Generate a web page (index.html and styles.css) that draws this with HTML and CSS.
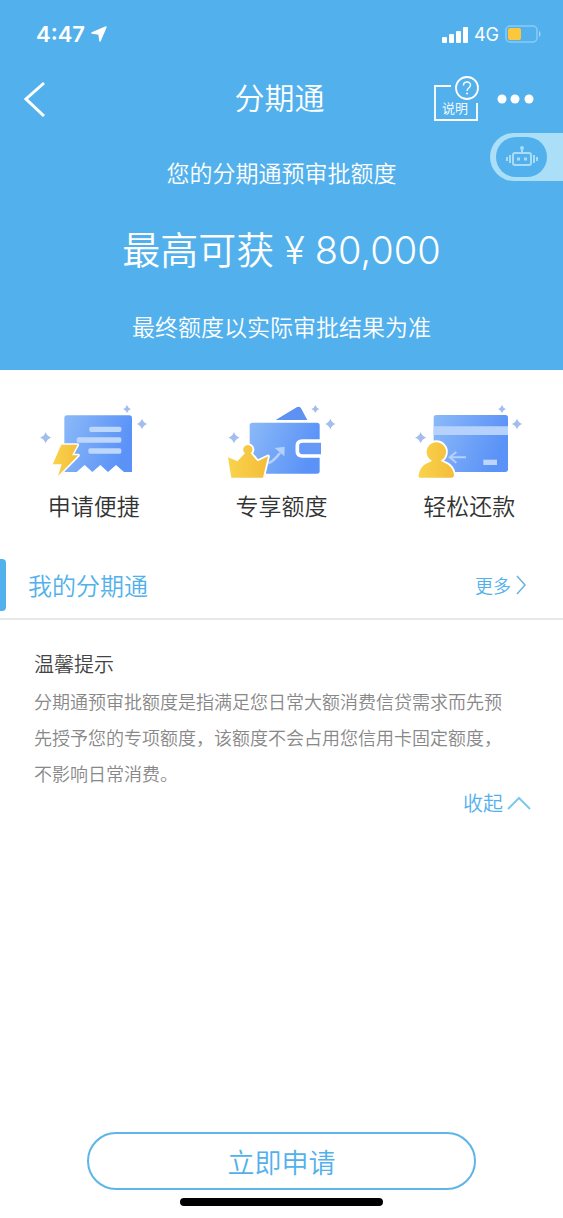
FILE: index.html
```html
<!DOCTYPE html>
<html lang="zh-CN">
<head>
    <meta charset="UTF-8">
    <meta name="viewport" content="width=device-width, initial-scale=1">
    <title>分期通</title>
    <link rel="stylesheet" href="styles.css">
</head>
<body>
<header class="top">
    <div class="status">
        <div class="status-left">
            <span class="time">4:47</span>
            <svg width="16" height="18" viewBox="0 0 16 18"><path d="M1 8L15 2L9 16L8 9Z" fill="#fff" stroke="#fff" stroke-width="1.5" stroke-linejoin="round"/></svg>
        </div>
        <div class="status-right">
            <svg width="26" height="17" viewBox="0 0 26 17" fill="#fff">
                <rect x="0" y="11" width="5" height="6" rx="1"/>
                <rect x="7" y="8" width="5" height="9" rx="1"/>
                <rect x="14" y="5" width="5" height="12" rx="1"/>
                <rect x="21" y="1" width="5" height="16" rx="1"/>
            </svg>
            <span class="network">4G</span>
            <svg width="36" height="18" viewBox="0 0 36 18">
                <rect x="1" y="1" width="31" height="16" rx="4" fill="none" stroke="#8accf3" stroke-width="1.5"/>
                <rect x="3" y="3" width="13" height="12" rx="2" fill="#fcc73a"/>
                <path d="M34 6C36 7 36 11 34 12Z" fill="#a0d5f5"/>
            </svg>
        </div>
    </div>

    <nav class="nav">
        <a class="back" href="#" aria-label="返回">
            <svg width="22" height="36" viewBox="0 0 22 36" fill="none" stroke="#fff" stroke-width="3"><path d="M20 2L2 18L20 35"/></svg>
        </a>
        <h1 class="nav-title">分期通</h1>
        <div class="nav-right">
            <a class="explain" href="#" aria-label="说明">
                <svg width="48" height="46" viewBox="0 0 48 46" fill="none" stroke="#fff">
                    <path d="M18 10H2V44H44V27" stroke-width="1.8"/>
                    <circle cx="34" cy="12" r="11" stroke-width="1.8"/>
                    <path d="M30.500 9.500C30.500 5 37.500 5 37.500 9C37.500 12 34 12 34 15" stroke-width="1.4"/>
                    <circle cx="34" cy="17.500" r="1" fill="#fff" stroke="none"/>
                    <text x="9" y="37" class="explain-text">说明</text>
                </svg>
            </a>
            <button class="more-btn" type="button" aria-label="更多操作">
                <svg width="38" height="10" viewBox="0 0 38 10" fill="#fff"><circle cx="5" cy="5" r="4.500"/><circle cx="18" cy="5" r="4.500"/><circle cx="32" cy="5" r="4.500"/></svg>
            </button>
        </div>
    </nav>

    <p class="top-text">您的分期通预审批额度</p>
    <p class="amount"><span>最高可获</span><span>¥</span><span>80,000</span></p>
    <p class="top-text">最终额度以实际审批结果为准</p>

    <button class="robot" type="button" aria-label="智能客服">
        <span class="robot-face">
            <svg width="34" height="22" viewBox="0 0 34 22" fill="none" stroke="#a9dcf8" stroke-width="2">
                <rect x="8" y="7" width="18" height="12" rx="2"/>
                <path d="M17 7V2"/>
                <circle cx="17" cy="2" r="2" fill="#a9dcf8" stroke="none"/>
                <path d="M12 13h3M19 13h3" stroke-width="3"/>
                <path d="M5 9v8M29 9v8M2 11v4M32 11v4"/>
            </svg>
        </span>
    </button>
</header>

<main>
    <ul class="features">
        <li>
            <svg width="110" height="80" viewBox="27 15 330 240">
                <defs>
                    <linearGradient id="blue" x1="0" y1="0" x2="1" y2="0.3"><stop offset="0" stop-color="#8bb9f8"/><stop offset="1" stop-color="#5a92f7"/></linearGradient>
                    <linearGradient id="gold" x1="0" y1="0" x2="1" y2="0"><stop offset="0" stop-color="#f9d34c"/><stop offset="1" stop-color="#f4bd3a"/></linearGradient>
                    <g id="stars" fill="#a3bdec">
                        <path d="M291 30Q294 39 303 42Q294 45 291 54Q288 45 279 42Q288 39 291 30Z"/>
                        <path d="M336 71Q340 83 352 87Q340 91 336 103Q332 91 320 87Q332 83 336 71Z"/>
                        <path d="M47 111Q51 124 64 128Q51 132 47 145Q43 132 30 128Q43 124 47 111Z"/>
                    </g>
                </defs>
                <use href="#stars"/>
                <path d="M111 61H298Q306 61 306 69V231H282L258 210L234 231L211 210L187 231L164 210L140 231H103V69Q103 61 111 61Z" fill="url(#blue)"/>
                <g fill="#bdd6fc"><rect x="178" y="95" width="96" height="16" rx="5"/><rect x="140" y="127" width="134" height="16" rx="5"/><rect x="175" y="160" width="99" height="16" rx="5"/></g>
                <path d="M94 149H143L126 181H145L84 243L95 208H68Z" fill="url(#gold)" stroke="#fff" stroke-width="9" stroke-linejoin="round" paint-order="stroke"/>
            </svg>
            <span>申请便捷</span>
        </li>
        <li>
            <svg width="110" height="80" viewBox="27 15 330 240">
                <use href="#stars" x="4" y="0"/>
                <path d="M176 75L239 37Q247 33 252 40L271 75Z" fill="#5e91f1"/>
                <rect x="98" y="83" width="210" height="153" rx="8" fill="url(#blue)"/>
                <path d="M312 138H256Q241 138 241 152V169Q241 183 256 183H312" fill="#6698f8" stroke="#fff" stroke-width="11"/>
                <path d="M154 205Q170 198 189 174" fill="none" stroke="#b5d0fb" stroke-width="8"/>
                <path d="M173 159L203 155L202 184Z" fill="#b5d0fb"/>
                <path d="M33 187Q48 193 61 199L84 175A14 14 0 1 1 101 175L122 199L153 184L138 248H43Z" fill="url(#gold)" stroke="#fff" stroke-width="11" stroke-linejoin="round" paint-order="stroke"/>
            </svg>
            <span>专享额度</span>
        </li>
        <li>
            <svg width="110" height="80" viewBox="27 15 330 240">
                <use href="#stars"/>
                <rect x="86" y="60" width="223" height="171" rx="8" fill="url(#blue)"/>
                <path d="M86 94H309V120H86Z" fill="#b6d2fc"/>
                <rect x="235" y="194" width="41" height="16" fill="#bdd5fc"/>
                <path d="M183 187H137M154 171L134 187L154 203" fill="none" stroke="#b5d0fb" stroke-width="6"/>
                <path d="M80 196A29 29 0 1 1 108 196C108 200 112 201 118 203C136 209 145 224 147 240Q147 248 139 248H47Q39 248 41 240C44 222 54 208 70 203C76 201 80 200 80 196Z" fill="url(#gold)" stroke="#fff" stroke-width="11" paint-order="stroke"/>
            </svg>
            <span>轻松还款</span>
        </li>
    </ul>

    <section class="mine">
        <h2>我的分期通</h2>
        <a class="mine-more" href="#">更多
            <svg width="12" height="20" viewBox="0 0 12 20" fill="none" stroke="#6bb2e2" stroke-width="1.5"><path d="M2 1L10 10L2 19"/></svg>
        </a>
    </section>

    <section class="tips">
        <h3>温馨提示</h3>
        <p>分期通预审批额度是指满足您日常大额消费信贷需求而先预先授予您的专项额度，该额度不会占用您信用卡固定额度，不影响日常消费。</p>
        <button class="fold" type="button">收起
            <svg width="24" height="14" viewBox="0 0 24 14" fill="none" stroke="#7fc8ed" stroke-width="2"><path d="M1 13L12 2L23 13"/></svg>
        </button>
    </section>
</main>

<footer class="bottom">
    <button class="apply" type="button">立即申请</button>
    <div class="home-bar"></div>
</footer>
</body>
</html>
```
FILE: styles.css
```css
*{
    box-sizing: border-box;
    margin: 0;
    padding: 0;
}
body{
    min-height: 100vh;
    display: flex;
    flex-direction: column;
    background: #fff;
    font-family: "Noto Sans CJK SC", sans-serif;
    font-weight: 350;
}
a{
    text-decoration: none;
}
button{
    border: none;
    background: none;
    font: inherit;
    cursor: pointer;
}
svg{
    display: block;
    flex: none;
}

/* 顶部 */
.top{
    position: relative;
    padding-bottom: 26px;
    background: #52b1ec;
    color: #fff;
    text-align: center;
}
.status{
    display: flex;
    justify-content: space-between;
    align-items: center;
    height: 68px;
    padding: 0 22px 0 36px;
    font-family: Inter, sans-serif;
}
.status-left,
.status-right{
    display: flex;
    align-items: center;
    gap: 6px;
}
.time{
    font-size: 22px;
    font-weight: 600;
}
.network{
    font-size: 18px;
    font-weight: 400;
}
.nav{
    display: grid;
    grid-template-columns: 1fr auto 1fr;
    align-items: center;
    height: 62px;
    padding: 0 28px 0 24px;
}
.nav-title{
    padding-bottom: 6px;
    font-size: 30px;
    font-weight: 350;
}
.nav-right{
    display: flex;
    justify-content: flex-end;
    align-items: center;
    gap: 16px;
}
.explain-text{
    fill: #fff;
    stroke: none;
    font-size: 13px;
}
.top-text{
    font-size: 23px;
    line-height: 36px;
}
.nav + .top-text{
    margin-top: 24px;
}
.amount{
    display: flex;
    justify-content: center;
    gap: 10px;
    margin: 30px 0 28px;
    font-family: Inter, "Noto Sans CJK SC", sans-serif;
    font-size: 38px;
    line-height: 60px;
}

/* 客服入口,浮在顶部右侧 */
.robot{
    position: absolute;
    top: 133px;
    right: 0;
    width: 73px;
    height: 48px;
    padding: 4px 6px;
    border-radius: 24px 0 0 24px;
    background: #aadff7;
}
.robot-face{
    display: flex;
    justify-content: center;
    align-items: center;
    width: 51px;
    height: 40px;
    border-radius: 20px;
    background: #52b1ec;
}

/* 三个特点 */
.features{
    display: grid;
    grid-template-columns: repeat(3, 1fr);
    padding: 30px 0 37px;
    list-style: none;
}
.features li{
    display: flex;
    flex-direction: column;
    align-items: center;
    gap: 8px;
    color: #333;
    font-size: 23px;
    line-height: 34px;
}

.mine{
    display: flex;
    justify-content: space-between;
    align-items: center;
    padding: 0 36px 7px 0;
    border-bottom: 2px solid #e8e8e8;
    color: #52b1ec;
}
.mine h2{
    display: flex;
    gap: 22px;
    font-size: 24px;
    font-weight: 350;
    line-height: 52px;
}
.mine h2::before{
    content: "";
    width: 6px;
    border-radius: 0 4px 4px 0;
    background: #52b1ec;
}
.mine-more{
    display: flex;
    align-items: center;
    gap: 4px;
    color: #52b1ec;
    font-size: 18px;
}

/* 提示 */
.tips{
    padding: 25px 46px 0 34px;
}
.tips h3{
    color: #444;
    font-size: 20px;
    font-weight: 350;
    line-height: 38px;
}
.tips p{
    color: #888;
    font-size: 18px;
    line-height: 36px;
}
.fold{
    display: flex;
    align-items: center;
    gap: 4px;
    margin: -3px -14px 0 auto;
    color: #52b1ec;
    font-size: 20px;
}

/* 底部 */
.bottom{
    display: flex;
    flex-direction: column;
    align-items: center;
    gap: 8px;
    margin-top: auto;
    padding: 0 87px 12px;
}
.apply{
    width: 100%;
    height: 58px;
    border: 2px solid #5db5e8;
    border-radius: 29px;
    color: #52b1ec;
    font-size: 27px;
}
.home-bar{
    width: 52%;
    height: 8px;
    border-radius: 4px;
    background: #000;
}
```
